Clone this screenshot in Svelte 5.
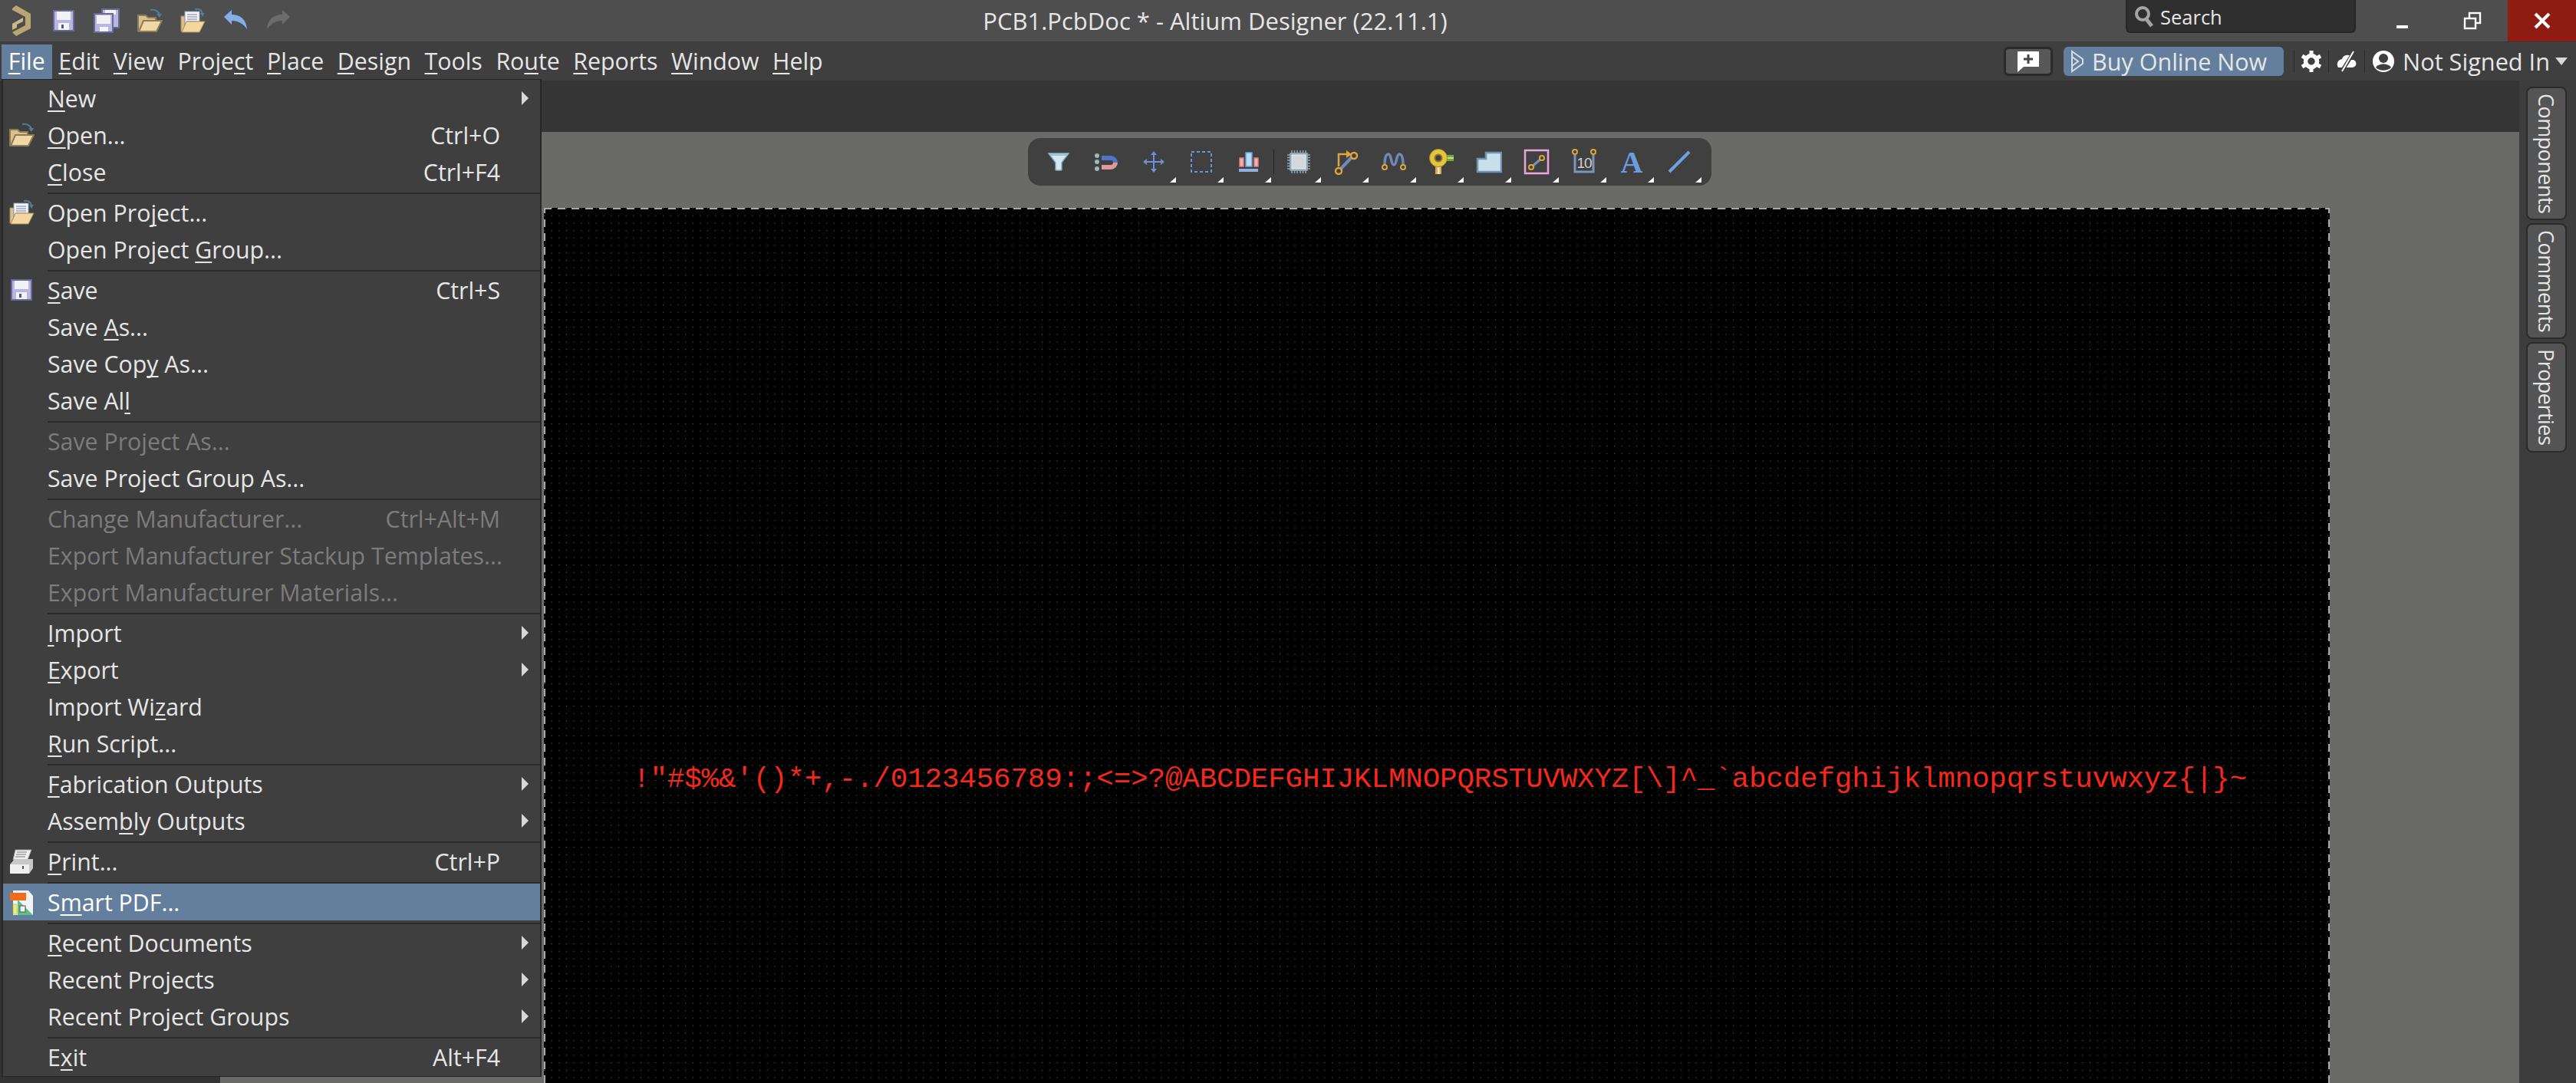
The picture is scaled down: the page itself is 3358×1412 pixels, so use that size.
<script>
  const menuBar = ['&File', '&Edit', '&View', 'Proje&ct', '&Place', '&Design', '&Tools', 'Ro&ute', '&Reports', '&Window', '&Help'];

  // '-' is a separator, & marks the access key
  const fileMenu = [
    { label: '&New', sub: true },
    { label: '&Open...', key: 'Ctrl+O', icon: 'open' },
    { label: '&Close', key: 'Ctrl+F4' },
    '-',
    { label: 'Open Pro&ject...', icon: 'project' },
    { label: 'Open Project &Group...' },
    '-',
    { label: '&Save', key: 'Ctrl+S', icon: 'save' },
    { label: 'Save &As...' },
    { label: 'Save Cop&y As...' },
    { label: 'Save Al&l' },
    '-',
    { label: 'Save Project As...', off: true },
    { label: 'Save Project Group As...' },
    '-',
    { label: 'Change Manufacturer...', key: 'Ctrl+Alt+M', off: true },
    { label: 'Export Manufacturer Stackup Templates...', off: true },
    { label: 'Export Manufacturer Materials...', off: true },
    '-',
    { label: '&Import', sub: true },
    { label: '&Export', sub: true },
    { label: 'Import Wi&zard' },
    { label: '&Run Script...' },
    '-',
    { label: '&Fabrication Outputs', sub: true },
    { label: 'Assem&bly Outputs', sub: true },
    '-',
    { label: '&Print...', key: 'Ctrl+P', icon: 'print' },
    '-',
    { label: 'S&mart PDF...', icon: 'pdf', active: true },
    '-',
    { label: '&Recent Documents', sub: true },
    { label: 'Recent Projects', sub: true },
    { label: 'Recent Project Groups', sub: true },
    '-',
    { label: 'E&xit', key: 'Alt+F4' }
  ];

  const tools = ['filter', 'magnet', 'move', 'select', 'align', 'chip', 'route', 'tune', 'via', 'poly', 'box', 'dim', 'text', 'line'];
  const noFlyout = ['filter', 'magnet'];

  function parts(label) {
    const i = label.indexOf('&');
    if (i < 0) return [label, '', ''];
    return [label.slice(0, i), label[i + 1], label.slice(i + 2)];
  }

  const charset = Array.from({ length: 94 }, (_, i) => String.fromCharCode(33 + i)).join('');
</script>

{#snippet mnemonic(label)}
  {@const p = parts(label)}
  {p[0]}<u>{p[1]}</u>{p[2]}
{/snippet}

{#snippet floppy()}
  <svg class="ic" viewBox="0 0 34 34">
    <rect x="4" y="4" width="26" height="26" fill="#b9b6e0" stroke="#66699a" stroke-width="2" />
    <rect x="8" y="5" width="18" height="11" fill="#f2f2f6" />
    <rect x="10" y="20" width="14" height="9" fill="#f4f4f8" />
    <rect x="14" y="22" width="3" height="5" fill="#55587e" />
  </svg>
{/snippet}

{#snippet folder()}
  <svg class="ic" viewBox="0 0 34 34">
    <path d="M2 31V10h10l3 3h10v5" fill="#d9c18f" stroke="#8b7c56" stroke-width="2" />
    <path d="M3 31l6-14h24l-7 14z" fill="#f0d8a6" stroke="#8b7c56" stroke-width="2" />
    <path d="M18 3c6-1 10 1 12 6" fill="none" stroke="#4f7d9c" stroke-width="2" />
    <path d="M26 8h7l-3 5z" fill="#4f7d9c" />
  </svg>
{/snippet}

{#snippet projectFolder()}
  <svg class="ic" viewBox="0 0 34 34">
    <path d="M2 31V11h5v20z" fill="#d9c18f" stroke="#a08c60" />
    <rect x="7" y="5" width="19" height="17" fill="#f6f6fa" stroke="#9aa0b0" />
    <path d="M10 9h13M10 12h13M10 15h13M10 18h13" stroke="#6f7fa0" />
    <path d="M3 32l6-14h24l-7 14z" fill="#f3d6a0" stroke="#a08c60" />
    <path d="M20 2c6-1 9 1 10 6" fill="none" stroke="#4f7d9c" stroke-width="2" />
    <path d="M27 7h6l-3 5z" fill="#4f7d9c" />
  </svg>
{/snippet}

<div class="app">
  <header class="titlebar">
    <div class="quick">
      <svg class="ic logo" viewBox="0 0 34 44">
        <path d="M6 6l5-4 19 11v19L11 42l-5-5 17-9V17L6 8z" fill="#b9a672" />
        <path d="M6 26l14-8v5l-8 4v4l-6 3z" fill="#cdb985" />
      </svg>
      {@render floppy()}
      <svg class="ic" viewBox="0 0 34 34">
        <rect x="11" y="2" width="22" height="24" fill="#b9b6e0" stroke="#66699a" stroke-width="2" />
        <rect x="15" y="3" width="14" height="6" fill="#f2f2f6" />
        <rect x="1" y="8" width="24" height="24" fill="#b9b6e0" stroke="#66699a" stroke-width="2" />
        <rect x="4" y="10" width="18" height="11" fill="#f2f2f6" />
        <rect x="8" y="25" width="11" height="6" fill="#f4f4f8" />
      </svg>
      {@render folder()}
      {@render projectFolder()}
      <svg class="ic" viewBox="0 0 34 34"><path d="M2 12L12 3v6c11 0 19 6 20 19-5-7-11-11-20-11v5z" fill="#86aee6" /></svg>
      <svg class="ic" viewBox="0 0 34 34"><path d="M32 12L22 3v6C11 9 3 15 2 28c5-7 11-11 20-11v5z" fill="#6c6c6c" /></svg>
    </div>
    <div class="title">PCB1.PcbDoc * - Altium Designer (22.11.1)</div>
    <div class="search">
      <svg width="28" height="30" viewBox="0 0 28 30"><circle cx="11" cy="11" r="8" fill="none" stroke="#a4a4a4" stroke-width="4" /><path d="M16 18l7 9" stroke="#a4a4a4" stroke-width="5" /></svg>
      <span>Search</span>
    </div>
    <div class="winbtns">
      <button class="winbtn"><i class="min"></i></button>
      <button class="winbtn">
        <svg width="24" height="24" viewBox="0 0 24 24" fill="none" stroke="#fff" stroke-width="2.4"><rect x="8" y="2" width="14" height="13" /><rect x="2" y="9" width="14" height="13" fill="#4f4f4f" /></svg>
      </button>
      <button class="winbtn close">
        <svg width="24" height="24" viewBox="0 0 24 24" stroke="#fff" stroke-width="4"><path d="M3 3l18 18M21 3L3 21" /></svg>
      </button>
    </div>
  </header>

  <nav class="menubar">
    {#each menuBar as m, i}
      <span class="mb" class:open={i === 0}>{@render mnemonic(m)}</span>
    {/each}
    <div class="spacer"></div>
    <button class="feedback">
      <svg width="34" height="30" viewBox="0 0 34 30"><path d="M3 2h28v20H11l-8 7z" fill="#fff" /><path d="M17 6v12M11 12h12" stroke="#444" stroke-width="3" /></svg>
    </button>
    <button class="buy">
      <svg width="20" height="30" viewBox="0 0 20 30" fill="none" stroke="#d5dde8" stroke-width="2"><path d="M3 2l14 10v6L3 28z" /><path d="M3 9l8 6-8 6" /></svg>
      Buy Online Now
    </button>
    <i class="rule"></i>
    <svg class="st" width="26" height="30" viewBox="0 0 26 30">
      <circle cx="13" cy="15" r="7.5" fill="none" stroke="#fff" stroke-width="5.5" />
      <path d="M13 1v6M13 23v6M1 8l5 3M25 8l-5 3M1 22l5-3M25 22l-5-3" stroke="#fff" stroke-width="5" />
    </svg>
    <i class="rule"></i>
    <svg class="st" width="28" height="30" viewBox="0 0 28 30">
      <path d="M20 9A7 7 0 0 0 8 12a7 7 0 0 0-5 11h6z" fill="#fff" />
      <path d="M18 13h5a5 5 0 0 1 1 9 5 5 0 0 1-3 1h-9z" fill="#fff" />
      <path d="M24 2L7 29" stroke="#3f3f3f" stroke-width="5" />
      <path d="M23 2L8 28" stroke="#fff" stroke-width="2" />
    </svg>
    <i class="rule"></i>
    <svg class="st user" width="30" height="30" viewBox="0 0 30 30">
      <circle cx="15" cy="15" r="14" fill="#fff" />
      <circle cx="15" cy="11" r="6" fill="#3f3f3f" />
      <path d="M5 23c3-6 17-6 20 0-5 5-15 5-20 0z" fill="#3f3f3f" />
    </svg>
    <span class="signed">Not Signed In</span>
    <i class="caret"></i>
  </nav>

  <main class="work">
    <aside class="leftpane"></aside>

    <section class="doc">
      <div class="tabstrip"></div>
      <div class="canvas">
        <div class="board">
          <div class="charset">{charset}</div>
        </div>
      </div>

      <div class="toolbar">
        {#each tools as t}
          <div class="slot">
            <svg width="34" height="34" viewBox="0 0 34 34">
              {#if t === 'filter'}
                <path d="M4 6h26l-9 12v9q0 1-1 1h-6q-1 0-1-1v-9z" fill="#d4e8f1" stroke="#83abbd" stroke-width="1.5" />
                <path d="M4 6h26l-2 3H6z" fill="#9cc3d4" />
              {:else if t === 'magnet'}
                <circle cx="5" cy="9" r="3" fill="#9fb6ba" />
                <circle cx="5" cy="17" r="3" fill="#9fb6ba" />
                <circle cx="5" cy="26" r="3" fill="#9fb6ba" />
                <path d="M11 12h12a6 6 0 0 1 6 6" fill="none" stroke="#4f74c8" stroke-width="6" />
                <path d="M29 18a6 6 0 0 1-6 6H11" fill="none" stroke="#e2989c" stroke-width="6" />
              {:else if t === 'move'}
                <path d="M17 6v22M6 17h22" stroke="#6f90d8" stroke-width="2" />
                <path d="M17 3l-4 5h8zM17 31l-4-5h8zM3 17l5-4v8zM31 17l-5-4v8z" fill="#6f90d8" />
              {:else if t === 'select'}
                <rect x="4" y="4" width="26" height="26" fill="none" stroke="#7092dc" stroke-width="2" stroke-dasharray="4 3" />
              {:else if t === 'align'}
                <rect x="5" y="12" width="5" height="11" fill="#f0b0b0" stroke="#d98080" stroke-width="1.5" />
                <rect x="13" y="5" width="8" height="18" fill="#b4dcf2" stroke="#6fa0d8" stroke-width="1.5" />
                <rect x="24" y="12" width="5" height="11" fill="#f0b0b0" stroke="#d98080" stroke-width="1.5" />
                <rect x="4" y="26" width="25" height="4" fill="#8fb0e4" />
              {:else if t === 'chip'}
                <path d="M8 2v30M11.500 2v30M15 2v30M19 2v30M22.500 2v30M26 2v30M2 8h30M2 11.500h30M2 15h30M2 19h30M2 22.500h30M2 26h30" stroke="#90a8b6" stroke-width="1.5" />
                <rect x="5" y="5" width="24" height="24" fill="#8fa6b4" rx="2" />
                <rect x="8" y="8" width="18" height="18" fill="#d4d8da" stroke="#eceef0" />
              {:else if t === 'route'}
                <path d="M8 28L26 9" stroke="#6f8bb8" stroke-width="4" />
                <path d="M7 23V7h11" fill="none" stroke="#dba53c" stroke-width="2.5" />
                <path d="M17 2l7 5-7 5z" fill="#dba53c" />
                <circle cx="7" cy="29" r="4" fill="#3f3f3f" stroke="#dba53c" stroke-width="2.5" />
                <circle cx="27" cy="9" r="4" fill="#3f3f3f" stroke="#dba53c" stroke-width="2.5" />
              {:else if t === 'tune'}
                <path d="M5 21C5 10 7 7 10 7c4 0 3 14 7 14s3-14 7-14c3 0 5 3 5 14" fill="none" stroke="#6f89b6" stroke-width="3.5" />
                <circle cx="5" cy="24" r="3" fill="#3f3f3f" stroke="#dba53c" stroke-width="2" />
                <circle cx="29" cy="24" r="3" fill="#3f3f3f" stroke="#dba53c" stroke-width="2" />
              {:else if t === 'via'}
                <rect x="23" y="8" width="10" height="8" fill="#6fae3c" />
                <path d="M24 12h9" stroke="#dcebb8" stroke-width="1.5" />
                <rect x="9" y="22" width="8" height="11" fill="#e3a45c" />
                <rect x="12" y="22" width="2.500" height="11" fill="#fae6c8" />
                <circle cx="13" cy="12" r="11.500" fill="#e6c43c" stroke="#a88e2c" />
                <circle cx="13" cy="12" r="4.500" fill="#3f3f3f" stroke="#8f7a28" stroke-width="2" />
              {:else if t === 'poly'}
                <path d="M2 13h11V5h20v25H2z" fill="#c9e0ea" stroke="#7092b4" stroke-width="2.500" />
              {:else if t === 'box'}
                <rect x="2" y="2" width="30" height="30" fill="none" stroke="#e9a6de" stroke-width="2.500" />
                <path d="M10 24l14-12" stroke="#7390bb" stroke-width="3" />
                <circle cx="10" cy="24" r="3" fill="#3f3f3f" stroke="#dba53c" stroke-width="2" />
                <circle cx="24" cy="12" r="3" fill="#3f3f3f" stroke="#dba53c" stroke-width="2" />
              {:else if t === 'dim'}
                <path d="M5 8v22h24V8" fill="none" stroke="#7a95c0" stroke-width="3" />
                <circle cx="5" cy="4" r="3" fill="#3f3f3f" stroke="#dba53c" stroke-width="2" />
                <circle cx="29" cy="4" r="3" fill="#3f3f3f" stroke="#dba53c" stroke-width="2" />
                <text x="17" y="25" text-anchor="middle" class="dimtext">10</text>
              {:else if t === 'text'}
                <text x="17" y="31" text-anchor="middle" class="atext">A</text>
              {:else if t === 'line'}
                <path d="M4 30L30 4" stroke="#6ea0e0" stroke-width="4" />
              {/if}
            </svg>
            {#if !noFlyout.includes(t)}<i class="flyout"></i>{/if}
          </div>
          {#if t === 'align'}<i class="toolsep"></i>{/if}
        {/each}
      </div>
    </section>

    <aside class="panels">
      <button class="ptab">Components</button>
      <button class="ptab">Comments</button>
      <button class="ptab">Properties</button>
    </aside>

    <div class="filemenu">
      {#each fileMenu as item}
        {#if item === '-'}
          <div class="sep"></div>
        {:else}
          <div class="row" class:off={item.off} class:active={item.active}>
            <span class="iconcell">
              {#if item.icon === 'open'}
                {@render folder()}
              {:else if item.icon === 'project'}
                {@render projectFolder()}
              {:else if item.icon === 'save'}
                {@render floppy()}
              {:else if item.icon === 'print'}
                <svg class="ic" viewBox="0 0 34 34">
                  <path d="M9 2h21l-5 13H6z" fill="#f0f0f0" stroke="#999" />
                  <path d="M11 5h13M10 8h13M9 11h13" stroke="#777" />
                  <path d="M2 21l6-7h24v12l-5 7H2z" fill="#c8c8c8" />
                  <path d="M2 21h25v12H2z" fill="#eee" />
                  <rect x="18" y="23" width="2" height="4" fill="#555" />
                </svg>
              {:else if item.icon === 'pdf'}
                <svg class="ic" viewBox="0 0 34 34">
                  <path d="M6 2h20l6 7v25H6z" fill="#f4f4f4" />
                  <path d="M12 14l20 20H12z" fill="#5fbf88" />
                  <rect x="6" y="20" width="5" height="13" fill="#f4f060" stroke="#999" stroke-width=".5" />
                  <rect x="15" y="22" width="7" height="8" fill="#e8f4e8" stroke="#555" />
                  <rect x="2" y="5" width="21" height="10" fill="#ee6c1c" />
                </svg>
              {/if}
            </span>
            <span class="rowlabel">{@render mnemonic(item.label)}</span>
            {#if item.key}<span class="rowkey">{item.key}</span>{/if}
            {#if item.sub}<i class="arrow"></i>{/if}
          </div>
        {/if}
      {/each}
    </div>
  </main>
</div>

<style>
  :global(body) {
    margin: 0;
    background: #3f3f3f;
  }

  .app {
    width: 3358px;
    height: 1412px;
    overflow: hidden;
    display: flex;
    flex-direction: column;
    font-family: "Open Sans", "Noto Sans", sans-serif;
    font-size: 30.3px;
    color: #e6e6e6;
  }

  button {
    font: inherit;
    color: inherit;
    border: 0;
    padding: 0;
    background: none;
  }

  u {
    text-underline-offset: 4px;
    text-decoration-thickness: 2px;
    text-decoration-skip-ink: none;
  }

  .ic {
    width: 34px;
    height: 34px;
    display: block;
    flex: none;
  }

  .logo {
    height: 44px;
    margin-top: -5px;
    margin-bottom: -5px;
  }

  .titlebar {
    position: relative;
    height: 55px;
    flex: none;
    display: flex;
    align-items: center;
    background: #4e4e4e;
    border-bottom: 1px solid #3a3a3a;
    box-sizing: border-box;
  }

  .quick {
    display: flex;
    align-items: center;
    gap: 22px;
    padding-left: 10px;
  }

  .title {
    position: absolute;
    left: 0;
    width: 3168px;
    text-align: center;
    font-size: 31px;
  }

  .search {
    margin-left: auto;
    width: 300px;
    height: 43px;
    margin-top: -12px;
    box-sizing: border-box;
    padding: 3px 0 0 9px;
    display: flex;
    align-items: center;
    gap: 6px;
    background: #2f2f2f;
    border: 2px solid #262626;
    border-top: 0;
    border-radius: 0 0 6px 6px;
    font-size: 25.5px;
  }

  .winbtns {
    display: flex;
    margin-left: 14px;
    align-self: stretch;
  }

  .winbtn {
    width: 92px;
    display: flex;
    align-items: center;
    justify-content: center;
  }

  .winbtn svg {
    margin-bottom: 1px;
  }

  .min {
    width: 15px;
    height: 4px;
    background: #fff;
    margin-top: 16px;
  }

  .close {
    width: 89px;
    background: #8f1c12;
  }

  .menubar {
    height: 50px;
    flex: none;
    display: flex;
    align-items: center;
    padding-left: 2px;
    background: #3f3f3f;
  }

  .mb {
    height: 45px;
    line-height: 44px;
    padding: 0 8.8px;
  }

  .mb.open {
    background: #647f9e;
    color: #fff;
  }

  .spacer {
    flex: 1;
  }

  .feedback {
    width: 64px;
    height: 38px;
    box-sizing: border-box;
    display: flex;
    align-items: center;
    justify-content: center;
    background: #585858;
    border: 3px solid #2b2b2b;
    border-radius: 6px;
  }

  .buy {
    width: 287px;
    height: 38px;
    margin-left: 14px;
    display: flex;
    align-items: center;
    gap: 9px;
    padding-left: 8px;
    box-sizing: border-box;
    background: #647f9e;
    border-radius: 6px;
    font-size: 30.5px;
  }

  .rule {
    width: 1px;
    height: 30px;
    background: #2a2a2a;
    margin: 0 9px;
  }

  .rule:first-of-type {
    margin-left: 13px;
  }

  .st {
    flex: none;
  }

  .user {
    margin-right: 10px;
  }

  .signed {
    font-size: 30.7px;
  }

  .caret {
    margin: 0 11px 0 7px;
    border-left: 8px solid transparent;
    border-right: 8px solid transparent;
    border-top: 10px solid #d8d8d8;
  }

  .work {
    position: relative;
    flex: 1;
    display: flex;
    min-height: 0;
  }

  .leftpane {
    width: 287px;
    flex: none;
    background: #333;
  }

  .doc {
    position: relative;
    flex: 1;
    display: flex;
    flex-direction: column;
    min-width: 0;
  }

  .tabstrip {
    height: 67px;
    flex: none;
    background: #353535;
  }

  .canvas {
    flex: 1;
    min-height: 0;
    padding: 99px 0 0 422px;
    background: #6a6a68;
  }

  .board {
    width: 2328px;
    height: 100%;
    box-sizing: border-box;
    padding-top: 722px;
    padding-left: 116px;
    background-color: #000;
    background-image:
      repeating-linear-gradient(90deg, #a8a8a8 0 10px, transparent 10px 18px),
      repeating-linear-gradient(0deg, #a8a8a8 0 10px, transparent 10px 18px),
      repeating-linear-gradient(0deg, #a8a8a8 0 10px, transparent 10px 18px),
      radial-gradient(circle at 0.6px 0.6px, #5c5c5c 0.7px, transparent 0.9px);
    background-size: 100% 2px, 2px 100%, 2px 100%, 9.7px 9.7px;
    background-position: 0 0, 0 0, 100% 0, 0 0;
    background-repeat: no-repeat, no-repeat, no-repeat, repeat;
  }

  .charset {
    font-family: "Liberation Mono", monospace;
    font-size: 37.5px;
    line-height: 46px;
    letter-spacing: -0.12px;
    color: #f4281c;
    white-space: pre;
  }

  .toolbar {
    position: absolute;
    left: 1053px;
    top: 75px;
    width: 891px;
    height: 62px;
    box-sizing: border-box;
    padding-left: 9px;
    display: flex;
    align-items: center;
    background: #404040;
    border-radius: 16px;
  }

  .slot {
    position: relative;
    width: 62px;
    height: 62px;
    flex: none;
    display: flex;
    align-items: center;
    justify-content: center;
  }

  .flyout {
    position: absolute;
    right: 2px;
    bottom: 4px;
    border-left: 8px solid transparent;
    border-bottom: 7px solid #fff;
  }

  .toolsep {
    width: 1px;
    height: 32px;
    margin: 0 1px;
    flex: none;
    background: #222;
  }

  .dimtext {
    font-family: "Liberation Sans", sans-serif;
    font-size: 19px;
    letter-spacing: -1px;
    fill: #cfcfcf;
  }

  .atext {
    font-family: "Liberation Serif", serif;
    font-size: 40px;
    font-weight: 700;
    fill: #6a9ce0;
  }

  .panels {
    width: 74px;
    flex: none;
    box-sizing: border-box;
    padding: 8px 0 0 9px;
    display: flex;
    flex-direction: column;
    gap: 4px;
    background: #3d3d3d;
  }

  .ptab {
    width: 53px;
    box-sizing: border-box;
    writing-mode: vertical-rl;
    text-align: center;
    padding: 7px 0;
    background: #545454;
    border: 2px solid #2b2b2b;
    border-radius: 8px;
    font-size: 27px;
    letter-spacing: -0.55px;
  }

  .filemenu {
    position: absolute;
    left: 2px;
    top: -2px;
    width: 704px;
    height: 1301px;
    box-sizing: border-box;
    background: #3f3f3f;
    border: 1px solid #262626;
    border-width: 1px 2px;
  }

  .row {
    height: 48px;
    display: flex;
    align-items: center;
    white-space: nowrap;
  }

  .row.off {
    color: #7c7c7c;
  }

  .row.active {
    background: #647f9e;
    color: #fff;
  }

  .iconcell {
    width: 58px;
    flex: none;
    display: flex;
    padding-left: 7px;
    box-sizing: border-box;
  }

  .rowlabel {
    flex: 1;
  }

  .rowkey {
    margin-right: 52px;
  }

  .arrow {
    margin-right: 15px;
    border-top: 9px solid transparent;
    border-bottom: 9px solid transparent;
    border-left: 9px solid #d8d8d8;
  }

  .sep {
    height: 5px;
    margin-left: 58px;
    box-sizing: border-box;
    border-bottom: 2px solid #2a2a2a;
    border-top: 1px solid transparent;
    padding-bottom: 1px;
    background-clip: padding-box;
  }
</style>
